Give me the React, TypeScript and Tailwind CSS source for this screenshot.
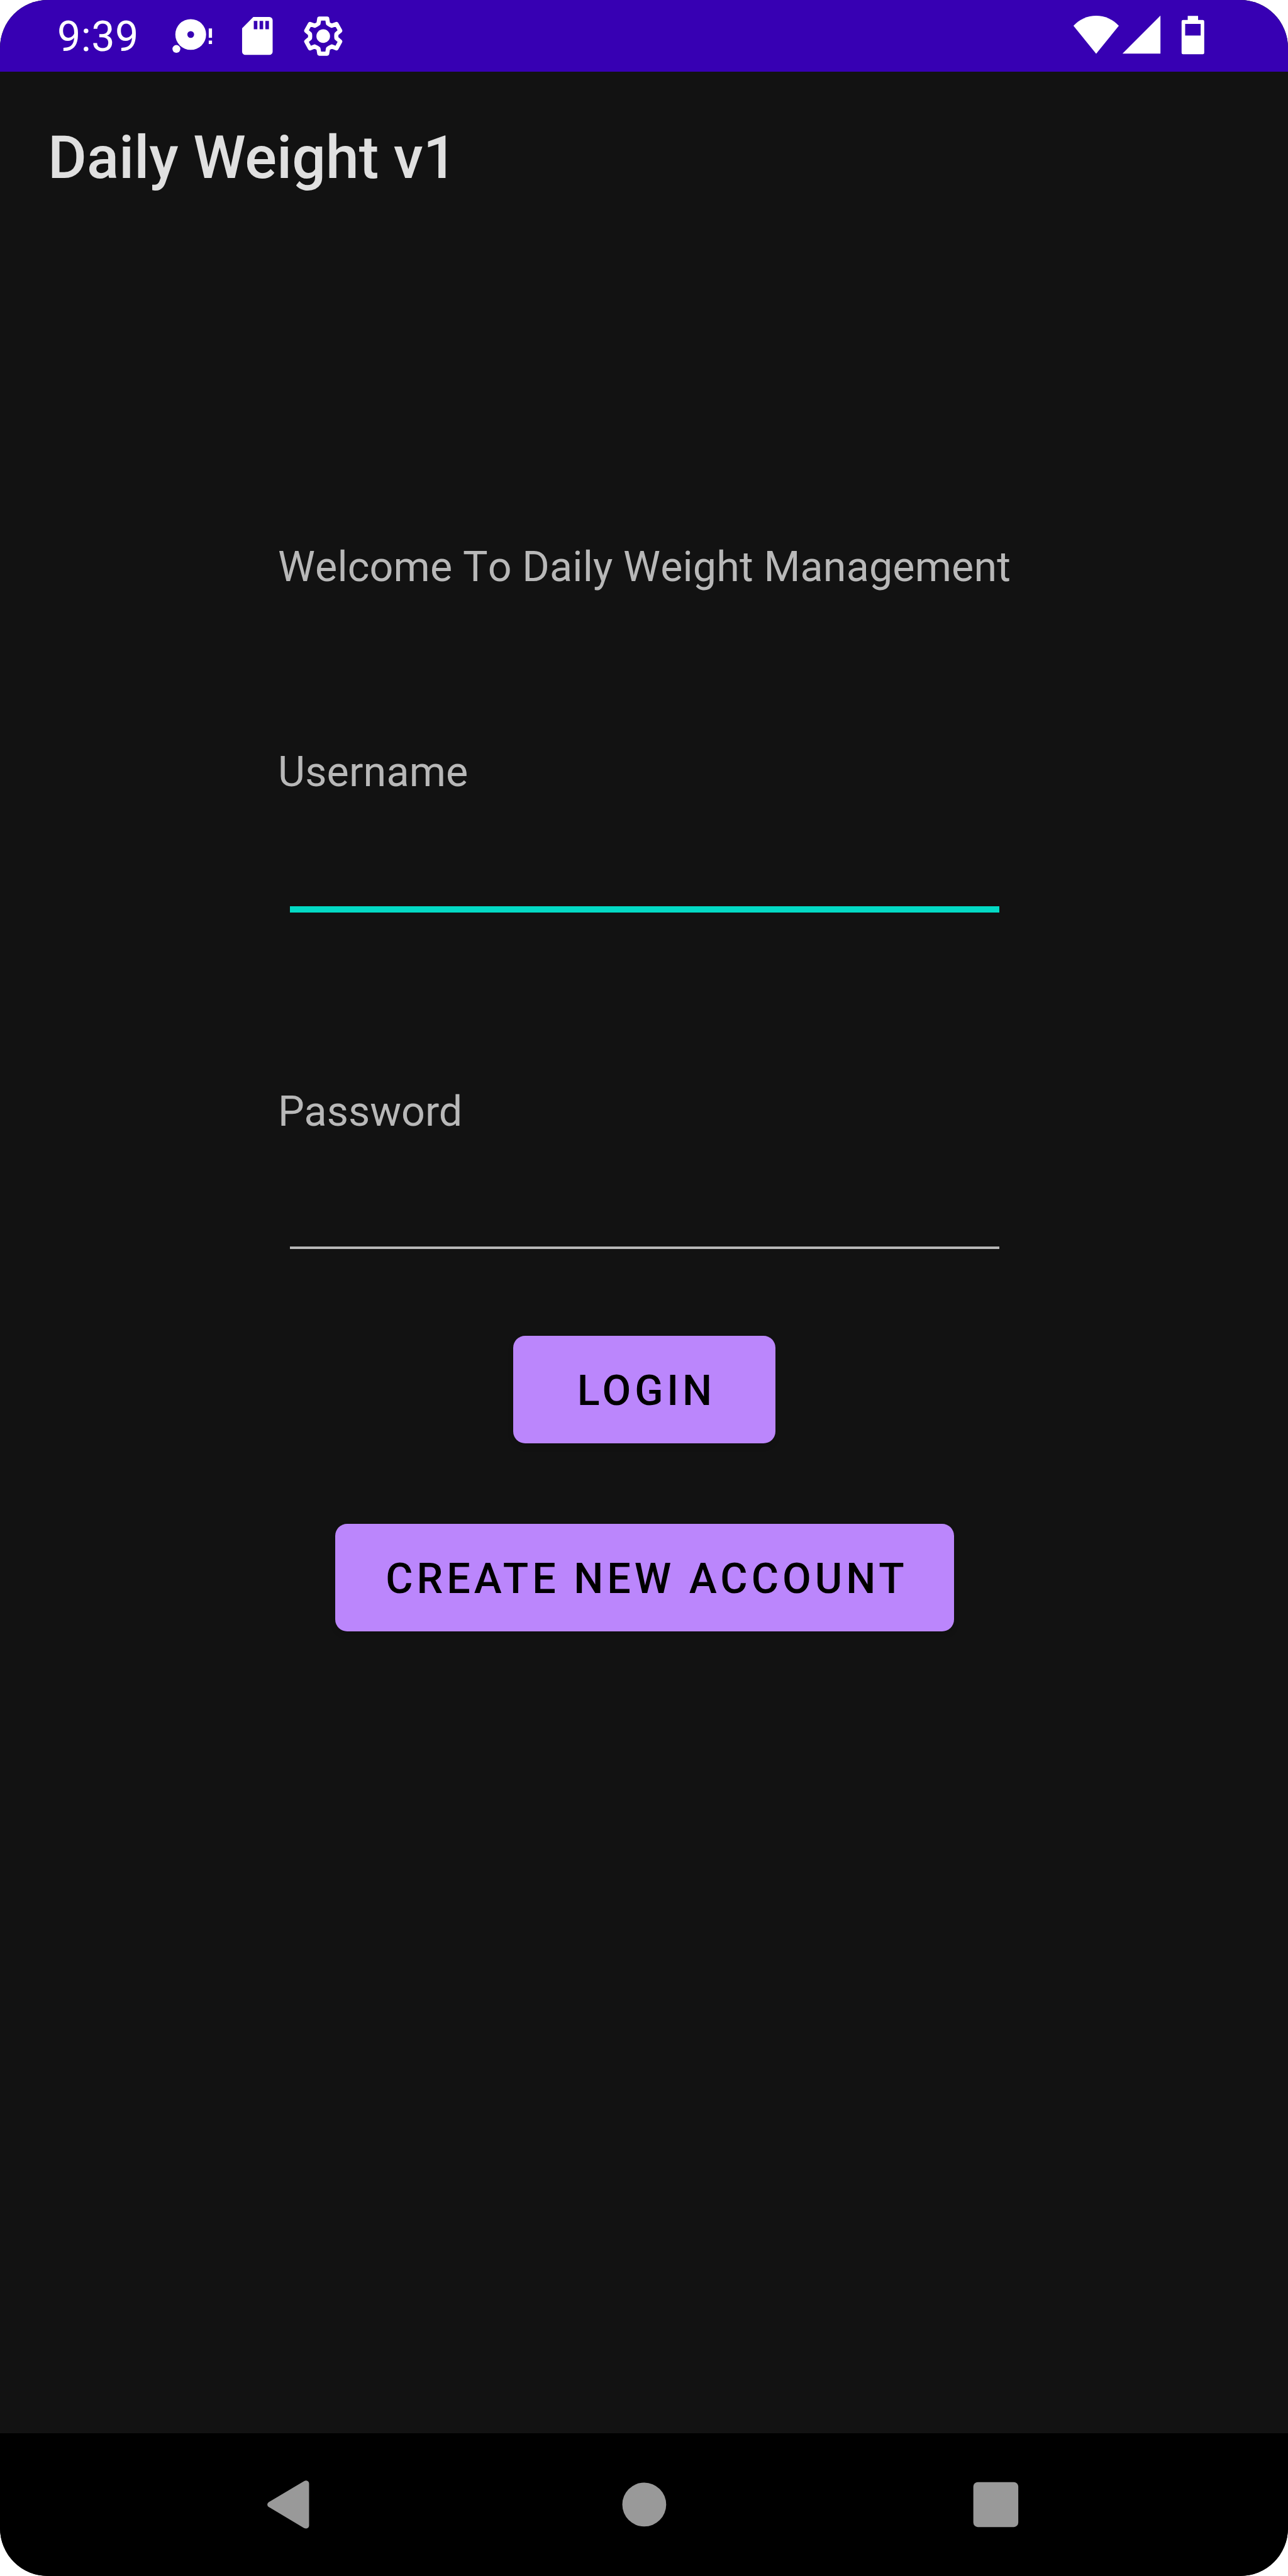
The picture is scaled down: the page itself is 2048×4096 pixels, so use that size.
const font = { fontFamily: 'Roboto, "Liberation Sans", sans-serif' };

function DiskIcon() {
  return (
    <svg className="h-[75.9px] w-[75.9px] shrink-0" viewBox="286 20 80 80" fill="#fff">
      <path
        fillRule="evenodd"
        d="M320 32a25.800 25.800 0 1 0 0 51.600a25.800 25.800 0 1 0 0-51.600zM320 52.100a5.700 5.700 0 1 1 0 11.400a5.700 5.700 0 1 1 0-11.400z"
      />
      <circle cx="296" cy="82" r="6.600" />
      <path d="M350.200 47.700h5.500v15.600h-5.500zM350.200 68h5.500v5.700h-5.500z" />
    </svg>
  );
}

function SdCardIcon() {
  return (
    <svg className="ml-[24.6px] h-[75.9px] w-[75.9px] shrink-0" viewBox="392 20 80 80" fill="#fff">
      <path
        fillRule="evenodd"
        d="M425.500 28.500H452.500a5.400 5.400 0 0 1 5.400 5.400V86.600a5.400 5.400 0 0 1-5.400 5.400H412.100a5.400 5.400 0 0 1-5.400-5.400V47.500zM426.300 35v14h6v-14zM436 35v14h6v-14zM445.700 35v14h6v-14z"
      />
    </svg>
  );
}

function GearIcon() {
  return (
    <svg className="ml-[29.1px] h-[75.9px] w-[75.9px] shrink-0" viewBox="-40 -40.500 80 80">
      <path
        d="M-8-21L-6.600-29.400H6.600L8-21Q10.500-19 14.200-17.400L22.200-20.400L28.500-9L22.200-3.600Q21.600 0 22.200 3.600L28.500 9L22.200 20.400L14.200 17.400Q10.500 19 8 21L6.600 29.400H-6.600L-8 21Q-10.500 19-14.200 17.400L-22.200 20.400L-28.500 9L-22.200 3.600Q-21.600 0-22.200-3.600L-28.500-9L-22.200-20.400L-14.200-17.400Q-10.500-19-8-21Z"
        fill="none"
        stroke="#fff"
        strokeWidth="7"
        strokeLinejoin="round"
      />
      <circle r="11.400" fill="#fff" />
    </svg>
  );
}

function WifiIcon() {
  return (
    <svg className="h-[75.9px] w-[75.9px] shrink-0" viewBox="1798 20 80 80" fill="#fff">
      <path d="M1800 43.300A51 51 0 0 1 1876 43.300L1838 90Z" />
    </svg>
  );
}

function SignalIcon() {
  return (
    <svg className="h-[75.9px] w-[68.3px] shrink-0" viewBox="1878 20 72 80" fill="#fff">
      <path d="M1882 89.800L1945.700 26V89.800Z" />
    </svg>
  );
}

function BatteryIcon() {
  return (
    <svg className="ml-[26.5px] h-[75.9px] w-[43.6px] shrink-0" viewBox="1978 20 46 80" fill="#fff">
      <path
        fillRule="evenodd"
        d="M1992.300 26.500H2009.700V33.500H2017.500a2.500 2.500 0 0 1 2.500 2.500V88.500a2.500 2.500 0 0 1-2.500 2.500H1984.500a2.500 2.500 0 0 1-2.500-2.500V36a2.500 2.500 0 0 1 2.500-2.500H1992.300zM1988 40V59.500H2014V40z"
      />
    </svg>
  );
}

export default function App() {
  return (
    <div className="h-[4096px] w-[2048px] bg-white" style={font}>
      <div className="flex h-full w-full flex-col overflow-hidden rounded-[76px] bg-[#121212]">
        <header className="flex h-[113.8px] shrink-0 items-center bg-[#3700b3] pr-[129px] text-white">
          <span className="ml-[91px] w-[180px] pt-[3px] text-[66.4px] leading-none tracking-[0.4px]">9:39</span>
          <DiskIcon />
          <SdCardIcon />
          <GearIcon />
          <div className="ml-auto flex">
            <WifiIcon />
            <SignalIcon />
            <BatteryIcon />
          </div>
        </header>

        <div className="flex h-[265.200px] shrink-0 pl-[76px] pt-[89px]">
          <h1 className="text-[94.8px] leading-[95px] font-medium text-[#e0e0e0]">Daily Weight v1</h1>
        </div>

        <main className="flex flex-1 flex-col pt-[483px]">
          <div className="ml-[442px] flex flex-col text-[66.4px] leading-[78px] whitespace-nowrap text-[#b8b8b8]">
            <p className="h-[78px] tracking-[0.150px] [font-kerning:none]">Welcome To Daily Weight Management</p>
            <div className="mt-[248px] flex flex-col">
              <label className="h-[78px] tracking-[0.150px]">Username</label>
              <div className="mt-[175px] ml-[19px] h-[10px] w-[1128px] bg-[#03dac5]" />
            </div>
            <div className="mt-[277px] flex flex-col">
              <label className="h-[78px]">Password</label>
              <div className="mt-[176px] ml-[19px] h-[4px] w-[1128px] bg-[#b8b8b8]" />
            </div>
          </div>
          <div className="mt-[138px] flex flex-col items-center gap-[128.500px]">
            <button className="flex h-[170.700px] w-[417px] items-center justify-center rounded-[19px] bg-[#bb86fc] pt-[3px] pl-[8px] text-[66.4px] leading-none font-medium tracking-[5.93px] text-black shadow-[0_5px_8px_rgba(0,0,0,0.15)]">
              LOGIN
            </button>
            <button className="ml-[2px] flex h-[170.700px] w-[984px] items-center justify-center rounded-[19px] bg-[#bb86fc] pt-[3px] pl-[7px] text-[66.4px] leading-none font-medium tracking-[6px] whitespace-nowrap text-black shadow-[0_5px_8px_rgba(0,0,0,0.15)]">
              CREATE NEW ACCOUNT
            </button>
          </div>
        </main>

        <nav className="flex h-[227.500px] shrink-0 items-center bg-black pl-[407.700px]">
          <svg className="h-[94.800px] w-[94.800px]" viewBox="0 0 100 100" fill="#999">
            <path d="M79.500 10.700Q82 9.500 84.500 10Q88 11 88 15V85Q88 89 84.500 90Q82 90.500 79.500 89.300L20.500 54Q18 52.500 18 50Q18 47.500 20.500 46Z" />
          </svg>
          <svg className="ml-[474.100px] h-[94.800px] w-[94.800px]" viewBox="0 0 100 100" fill="#999">
            <circle cx="50" cy="50" r="36.800" />
          </svg>
          <svg className="ml-[464.600px] h-[94.800px] w-[94.800px]" viewBox="0 0 100 100" fill="#999">
            <rect x="12.300" y="12.300" width="75.400" height="75.400" rx="7.500" />
          </svg>
        </nav>
      </div>
    </div>
  );
}
